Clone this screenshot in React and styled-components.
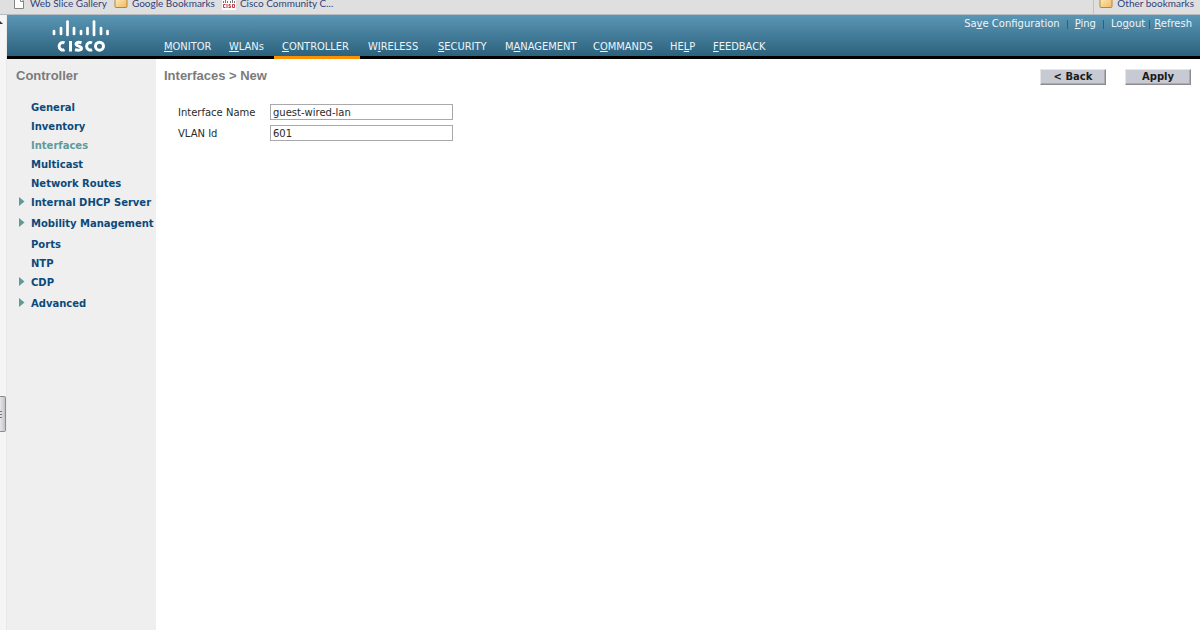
import React, { useState } from "react";
import styled, { createGlobalStyle } from "styled-components";

const GlobalStyle = createGlobalStyle`
  * {
    box-sizing: border-box;
  }
  body {
    margin: 0;
    background: #fff;
    font-family: "DejaVu Sans", Verdana, sans-serif;
    font-size: 10px;
    color: #2b2b2b;
  }
  a {
    color: inherit;
    text-decoration: none;
  }
`;
const Page = styled.div`
  min-height: 100vh;
  display: flex;
  flex-direction: column;
`;
const BookmarkBar = styled.div`
  height: 15px;
  display: flex;
  justify-content: space-between;
  padding: 0 6px 0 13px;
  background: #dfdfdf;
  border-bottom: 1px solid #b4bcc2;
`;
const BookmarkGroup = styled.div`
  display: flex;
  gap: 7px;
  padding-left: ${(props) => (props.$divided ? "5px" : "0")};
  border-left: ${(props) => (props.$divided ? "1px solid #bcc3cc" : "none")};
`;
const Bookmark = styled.a`
  display: flex;
  gap: 4px;
  height: 14px;
  font-family: Lato, "Segoe UI", sans-serif;
  font-size: 10px;
  line-height: 6px;
  white-space: nowrap;
  color: #2f3f78;
`;
const Frame = styled.div`
  flex: 1;
  display: flex;
`;
const Gutter = styled.div`
  width: 7px;
  flex: none;
  position: relative;
  background: #f5f5f5;
  border-right: 1px solid #e9e9e9;
`;
const ScrollArrow = styled.svg`
  position: absolute;
  top: 6px;
  left: 0;
`;
const PanelHandle = styled.button`
  position: absolute;
  top: 381px;
  left: 0;
  width: 6px;
  height: 36px;
  padding: 0;
  display: flex;
  align-items: center;
  border: 1px solid #8d8d8d;
  border-left: none;
  border-radius: 0 2px 2px 0;
  background: linear-gradient(90deg, #e6e6ea, #c3c3c8);
`;
const Console = styled.div`
  flex: 1;
  display: flex;
  flex-direction: column;
`;
const Header = styled.header`
  height: 44px;
  display: flex;
  align-items: flex-end;
  color: #fff;
  background: linear-gradient(#5a96b5, #2c627d 41px, #000 41px);
`;
const LogoBox = styled.div`
  width: 149px;
  height: 44px;
  flex: none;
  padding: 5px 0 0 45px;
`;
const LogoSvg = styled.svg`
  display: block;
`;
const Menu = styled.nav`
  display: grid;
  grid-template-columns: 65px 53px 86px 70px 67px 88px 77px 43px 71px;
`;
const MenuLink = styled.a`
  height: 23px;
  padding-left: 8px;
  font-family: "DejaVu Sans Condensed", "DejaVu Sans", Tahoma, sans-serif;
  font-size: 11px;
  line-height: 22px;
  white-space: nowrap;
  color: #eef5f9;
  border-bottom: 3px solid ${(props) => (props.$active ? "#ff9100" : "#000")};
`;
const HotKey = styled.span`
  text-decoration: underline;
`;
const Tools = styled.div`
  align-self: flex-start;
  margin-left: auto;
  padding: 3px 8px 0 0;
  display: flex;
  line-height: 12px;
  white-space: nowrap;
  color: #eef5f9;
`;
const Separator = styled.span`
  width: 1px;
  height: 9px;
  margin: 2px ${(props) => props.$space}px 0;
  background: #3d5488;
`;
const Content = styled.div`
  flex: 1;
  display: flex;
`;
const Sidebar = styled.aside`
  width: 149px;
  flex: none;
  padding: 8px 0 0 9px;
  background: #efefef;
`;
const Title = styled.h1`
  margin: 0;
  font-family: "Liberation Sans", Arial, sans-serif;
  font-size: 13px;
  font-weight: bold;
  line-height: 18px;
  color: #7b7b7b;
`;
const SideList = styled.ul`
  margin: 15px 0 0;
  padding: 0;
  list-style: none;
`;
const SideItem = styled.li`
  height: ${(props) => (props.$expandable ? "21px" : "19px")};
  display: flex;
  align-items: flex-start;
`;
const SideArrow = styled.span`
  width: 15px;
  height: 14px;
  padding: 2px 0 0 3px;
  flex: none;
`;
const SideLink = styled.a`
  font-weight: bold;
  line-height: 15px;
  white-space: nowrap;
  color: ${(props) => (props.$active ? "#5f9a9a" : "#0c4a7a")};
`;
const Main = styled.main`
  flex: 1;
  padding: 8px 9px 0 8px;
`;
const TitleRow = styled.div`
  display: flex;
  justify-content: space-between;
`;
const Actions = styled.div`
  display: flex;
  gap: 19px;
  padding-top: 2px;
`;
const ActionButton = styled.button`
  width: 66px;
  height: 16px;
  padding: 0;
  font-family: inherit;
  font-size: 10px;
  font-weight: bold;
  line-height: 12px;
  color: #1a1a1a;
  background: #c8cad3;
  border: 1px solid;
  border-color: #e6e6e6 #8c8c8c #8c8c8c #e6e6e6;
  box-shadow: inset -1px -1px 0 #a9abb3;
`;
const Form = styled.form`
  display: grid;
  grid-template-columns: 92px 183px;
  row-gap: 5px;
  padding: 19px 0 0 14px;
`;
const Label = styled.label`
  line-height: 17px;
  height: 16px;
  white-space: nowrap;
`;
const TextBox = styled.input`
  width: 100%;
  height: 16px;
  padding: 0 2px;
  font-family: inherit;
  font-size: 10px;
  color: #2b2b2b;
  background: #fff;
  border: 1px solid #a9a9ad;
  border-radius: 0;
`;

const menuItems = [
  ["", "M", "ONITOR"],
  ["", "W", "LANs"],
  ["", "C", "ONTROLLER"],
  ["W", "I", "RELESS"],
  ["", "S", "ECURITY"],
  ["M", "A", "NAGEMENT"],
  ["C", "O", "MMANDS"],
  ["HE", "L", "P"],
  ["", "F", "EEDBACK"],
];

const sideItems = [
  { name: "General" },
  { name: "Inventory" },
  { name: "Interfaces" },
  { name: "Multicast" },
  { name: "Network Routes" },
  { name: "Internal DHCP Server", expandable: true },
  { name: "Mobility Management", expandable: true },
  { name: "Ports" },
  { name: "NTP" },
  { name: "CDP", expandable: true },
  { name: "Advanced", expandable: true },
];

function HotText({ parts }) {
  return (
    <span>
      {parts[0]}
      <HotKey>{parts[1]}</HotKey>
      {parts[2]}
    </span>
  );
}

function PageIcon() {
  return (
    <svg width="13" height="10" viewBox="0 0 13 10">
      <path d="M1.5 -3V8.5H10.5V1L7 -3Z" fill="#fff" stroke="#858585" />
      <path d="M7.5 -2V1.5H10.5" fill="none" stroke="#858585" />
    </svg>
  );
}

function FolderIcon() {
  return (
    <svg width="14" height="10" viewBox="0 0 14 10">
      <defs>
        <linearGradient id="folder" x2="1" y2="1">
          <stop offset="0" stopColor="#fff0c4" />
          <stop offset="1" stopColor="#f0b75c" />
        </linearGradient>
      </defs>
      <rect x="1" y="-3" width="12" height="10.5" rx="1" fill="url(#folder)" stroke="#b98539" />
    </svg>
  );
}

function SiteIcon() {
  return (
    <svg width="14" height="10" viewBox="0 0 14 10">
      <rect width="14" height="10" fill="#fff" />
      <path d="M1.5 1V3M3.5 0V3M5.5 1V3M8.5 1V3M10.5 0V3M12.5 1V3" stroke="#777" />
      <path
        d="M3.5 4.5H1.5V7.5H3.5M5 4V8M8.5 4.5H7V6H8.5V7.5H6.500M10.5 4.5H12.5V7.5H10.5Z"
        fill="none"
        stroke="#c4383f"
      />
    </svg>
  );
}

function CiscoLogo() {
  const bars = [
    [2, 11, 14],
    [9, 8, 14],
    [15.5, 1.5, 15],
    [22, 8, 14],
    [29, 11, 14],
    [35.5, 8, 14],
    [42, 1.5, 15],
    [49, 8, 14],
    [55.5, 11, 14],
  ];
  return (
    <LogoSvg width="60" height="34" viewBox="0 0 60 34" role="img" aria-label="Cisco">
      <g stroke="#fff" strokeWidth="2.7" strokeLinecap="round">
        {bars.map(([x, top, bottom]) => (
          <path key={x} d={`M${x} ${top}V${bottom}`} />
        ))}
      </g>
      <g fill="none" stroke="#fff" strokeWidth="3">
        <path d="M12.5 22.800A3.800 3.800 0 1 0 12.5 29.700" />
        <path d="M18.500 21V31.500" />
        <path d="M29.500 22.700C26 21.800 24 22.500 24 24.100C24 26.700 29.500 25.500 29.500 28.300C29.500 30.400 26.500 30.500 23 29.800" />
        <path d="M40 22.800A3.800 3.800 0 1 0 40 29.700" />
        <circle cx="47.500" cy="26.200" r="4" />
      </g>
    </LogoSvg>
  );
}

function App() {
  const [name, setName] = useState("guest-wired-lan");
  const [vlan, setVlan] = useState("601");

  return (
    <Page>
      <GlobalStyle />
      <BookmarkBar>
        <BookmarkGroup>
          <Bookmark href="#">
            <PageIcon />
            Web Slice Gallery
          </Bookmark>
          <Bookmark href="#">
            <FolderIcon />
            Google Bookmarks
          </Bookmark>
          <Bookmark href="#">
            <SiteIcon />
            Cisco Community C...
          </Bookmark>
        </BookmarkGroup>
        <BookmarkGroup $divided>
          <Bookmark href="#">
            <FolderIcon />
            Other bookmarks
          </Bookmark>
        </BookmarkGroup>
      </BookmarkBar>
      <Frame>
        <Gutter>
          <ScrollArrow width="3" height="4" viewBox="0 0 3 4">
            <path d="M0 0L3 3H0Z" fill="#333" />
          </ScrollArrow>
          <PanelHandle aria-label="Toggle panel">
            <svg width="3" height="7" viewBox="0 0 3 7">
              <path d="M0 0.5H2M0 3.5H2M0 6.5H2" stroke="#777" />
            </svg>
          </PanelHandle>
        </Gutter>
        <Console>
          <Header>
            <LogoBox>
              <CiscoLogo />
            </LogoBox>
            <Menu>
              {menuItems.map((parts) => (
                <MenuLink key={parts.join("")} href="#" $active={parts[2] === "ONTROLLER"}>
                  <HotText parts={parts} />
                </MenuLink>
              ))}
            </Menu>
            <Tools>
              <a href="#">
                <HotText parts={["Sa", "v", "e Configuration"]} />
              </a>
              <Separator $space={7} />
              <a href="#">
                <HotText parts={["", "P", "ing"]} />
              </a>
              <Separator $space={7} />
              <a href="#">
                <HotText parts={["Lo", "g", "out"]} />
              </a>
              <Separator $space={4} />
              <a href="#">
                <HotText parts={["", "R", "efresh"]} />
              </a>
            </Tools>
          </Header>
          <Content>
            <Sidebar>
              <Title as="h2">Controller</Title>
              <SideList>
                {sideItems.map((item) => (
                  <SideItem key={item.name} $expandable={item.expandable}>
                    <SideArrow>
                      {item.expandable && (
                        <svg width="6" height="10" viewBox="0 0 6 10">
                          <path d="M0 0L5.5 4.5L0 9Z" fill="#5f9a9a" />
                        </svg>
                      )}
                    </SideArrow>
                    <SideLink href="#" $active={item.name === "Interfaces"}>
                      {item.name}
                    </SideLink>
                  </SideItem>
                ))}
              </SideList>
            </Sidebar>
            <Main>
              <TitleRow>
                <Title>Interfaces &gt; New</Title>
                <Actions>
                  <ActionButton type="button">&lt; Back</ActionButton>
                  <ActionButton type="submit" form="interface">
                    Apply
                  </ActionButton>
                </Actions>
              </TitleRow>
              <Form id="interface" onSubmit={(e) => e.preventDefault()}>
                <Label htmlFor="name">Interface Name</Label>
                <TextBox id="name" value={name} onChange={(e) => setName(e.target.value)} />
                <Label htmlFor="vlan">VLAN Id</Label>
                <TextBox id="vlan" value={vlan} onChange={(e) => setVlan(e.target.value)} />
              </Form>
            </Main>
          </Content>
        </Console>
      </Frame>
    </Page>
  );
}

export default App;
